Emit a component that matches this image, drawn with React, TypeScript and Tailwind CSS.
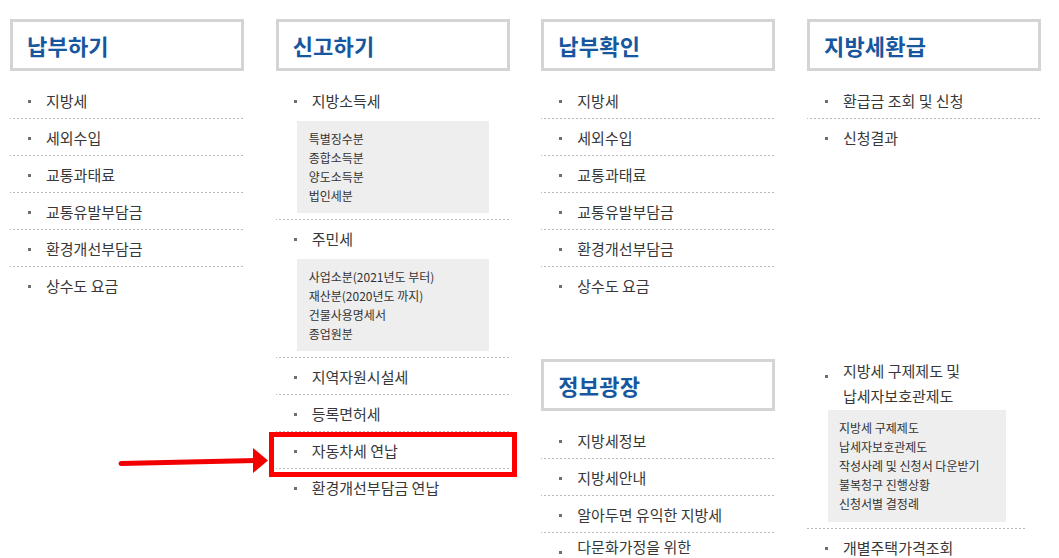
import React from "react";

const dash =
  "bg-[linear-gradient(to_right,#b9b9b9_2px,transparent_2px)] bg-[length:4px_1px] bg-repeat-x bg-bottom";

function Header({ title }: { title: string }) {
  return (
    <div className="h-[52px] border-[3px] border-[#d4d4d4] flex items-center pl-[14px] bg-white">
      <h2 className="text-[22px] font-bold text-[#17579f] leading-none tracking-[0.2px]">{title}</h2>
    </div>
  );
}

type ItemProps = {
  children: React.ReactNode;
  last?: boolean;
  multi?: boolean;
  sub?: string[];
  subClass?: string;
};

function Item({ children, last, multi, sub, subClass }: ItemProps) {
  return (
    <li className={`${multi ? "pt-[1px]" : "pt-[6px]"} ${sub ? "pb-[7px]" : "pb-[6px]"} ${last ? "" : dash}`}>
      <div className="flex items-start">
        <span className={`${multi ? "mt-[17px]" : "mt-[12px]"} ml-[18px] w-[3px] h-[3px] bg-[#6f6f6f] shrink-0`} />
        <span className="ml-[15px] text-[15px] leading-[25px] text-[#383838]">{children}</span>
      </div>
      {sub && (
        <div className={`mx-[21px] bg-[#eeeeee] px-[12px] text-[12px] leading-[19px] text-[#333333] ${subClass ?? "mt-[8px] py-[8px]"}`}>
          {sub.map((s) => (
            <div key={s}>{s}</div>
          ))}
        </div>
      )}
    </li>
  );
}

function SimpleList({ items }: { items: string[] }) {
  return (
    <ul className="mt-[11px]">
      {items.map((t, i) => (
        <Item key={t} last={i === items.length - 1}>
          {t}
        </Item>
      ))}
    </ul>
  );
}

const payItems = ["지방세", "세외수입", "교통과태료", "교통유발부담금", "환경개선부담금", "상수도 요금"];

export default function App() {
  return (
    <div className="relative w-[1059px] h-[558px] overflow-hidden bg-white font-['Noto_Sans_CJK_KR','Noto_Sans',sans-serif]">
      <div className="grid grid-cols-[234px_234px_234px_234px] gap-x-[31.67px] pl-[10px] pt-[19px] items-start">
        {/* 납부하기 */}
        <section>
          <Header title="납부하기" />
          <SimpleList items={payItems} />
        </section>

        {/* 신고하기 */}
        <section>
          <Header title="신고하기" />
          <ul className="mt-[11px]">
            <Item sub={["특별징수분", "종합소득분", "양도소득분", "법인세분"]}>지방소득세</Item>
            <Item sub={["사업소분(2021년도 부터)", "재산분(2020년도 까지)", "건물사용명세서", "종업원분"]}>주민세</Item>
            <Item>지역자원시설세</Item>
            <Item>등록면허세</Item>
            <Item>자동차세 연납</Item>
            <Item last>환경개선부담금 연납</Item>
          </ul>
        </section>

        {/* 납부확인 / 정보광장 */}
        <section>
          <Header title="납부확인" />
          <SimpleList items={payItems} />
          <div className="mt-[55px]">
            <Header title="정보광장" />
            <ul className="mt-[11px]">
              <Item>지방세정보</Item>
              <Item>지방세안내</Item>
              <Item>알아두면 유익한 지방세</Item>
              <Item multi last>
                다문화가정을 위한
                <br />
                지방세 안내
              </Item>
            </ul>
          </div>
        </section>

        {/* 지방세환급 */}
        <section>
          <Header title="지방세환급" />
          <SimpleList items={["환급금 조회 및 신청", "신청결과"]} />
          <ul className="mt-[201px] w-[220px]">
            <Item
              multi
              sub={["지방세 구제제도", "납세자보호관제도", "작성사례 및 신청서 다운받기", "불복청구 진행상황", "신청서별 결정례"]}
              subClass="mt-[2px] pt-[8px] pb-[9px] !px-[11px]"
            >
              지방세 구제제도 및
              <br />
              납세자보호관제도
            </Item>
            <Item last>개별주택가격조회</Item>
          </ul>
        </section>
      </div>

      {/* annotation: highlight box */}
      <div className="absolute left-[269px] top-[432px] w-[248px] h-[45px] border-[5px] border-[#ff0000]" />

      {/* annotation: arrow */}
      <svg className="absolute left-[110px] top-[440px]" width="165" height="40" viewBox="110 440 165 40">
        <line x1="121" y1="463.5" x2="256" y2="460.5" stroke="#f20000" strokeWidth="5" strokeLinecap="round" />
        <polygon points="253,448 268,460.5 253,473" fill="#f20000" />
      </svg>
    </div>
  );
}
